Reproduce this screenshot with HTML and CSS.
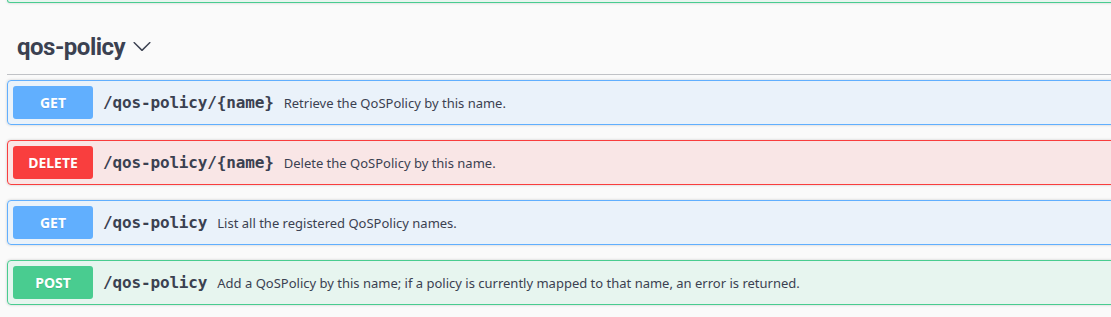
FILE: index.html
```html
<!DOCTYPE html>
<html lang="en">
<head>
    <meta charset="UTF-8">
    <meta name="viewport" content="width=device-width, initial-scale=1.0">
    <title>qos-policy</title>
    <link rel="stylesheet" href="styles.css">
</head>
<body>
    <div class="wrapper">
        <!-- tail of the previous tag section -->
        <div class="opblock opblock-post opblock-tail"></div>

        <div class="tag-section">
            <h3 class="opblock-tag">
                <span class="tag-name">qos-policy</span>
                <svg class="arrow" width="20" height="20" viewBox="0 0 20 20">
                    <path d="M17.418 6.109c.272-.268.709-.268.979 0s.271.701 0 .969l-7.908 7.83c-.27.268-.707.268-.979 0l-7.908-7.830c-.27-.268-.27-.701 0-.969.271-.268.709-.268.979 0L10 13.25l7.418-7.141z"/>
                </svg>
            </h3>

            <div class="opblock opblock-get">
                <div class="opblock-summary">
                    <span class="method">GET</span>
                    <span class="path">/qos-policy/{name}</span>
                    <span class="description">Retrieve the QoSPolicy by this name.</span>
                </div>
            </div>

            <div class="opblock opblock-delete">
                <div class="opblock-summary">
                    <span class="method">DELETE</span>
                    <span class="path">/qos-policy/{name}</span>
                    <span class="description">Delete the QoSPolicy by this name.</span>
                </div>
            </div>

            <div class="opblock opblock-get">
                <div class="opblock-summary">
                    <span class="method">GET</span>
                    <span class="path">/qos-policy</span>
                    <span class="description">List all the registered QoSPolicy names.</span>
                </div>
            </div>

            <div class="opblock opblock-post">
                <div class="opblock-summary">
                    <span class="method">POST</span>
                    <span class="path">/qos-policy</span>
                    <span class="description">Add a QoSPolicy by this name; if a policy is currently mapped to that name, an error is returned.</span>
                </div>
            </div>
        </div>
    </div>
</body>
</html>
```

FILE: styles.css
```css
body {
    margin: 0;
    background-color: #fafafa;
    font-family: 'Noto Sans', sans-serif;
    color: #3b4151;
    overflow: hidden;
}
.wrapper {
    width: 1200px;
    padding-left: 7px;
}
.opblock {
    margin: 0 0 15px;
    border: 1px solid #000;
    border-radius: 4px;
    box-shadow: 0 0 3px rgba(0, 0, 0, 0.19);
}
.opblock-tail {
    height: 2px;
    border-top: none;
    border-radius: 0 0 4px 4px;
}
.opblock-tag {
    display: flex;
    align-items: center;
    margin: 0 0 5px;
    padding: 11px 20px 9px 10px;
    font-family: Roboto, sans-serif;
    font-size: 24px;
    line-height: 36px;
    font-weight: 700;
    letter-spacing: -0.5px;
    border-bottom: 1px solid rgba(59, 65, 81, 0.3);
}
.arrow {
    margin-left: 7px;
    margin-top: -2px;
    fill: #3b4151;
}
.opblock-summary {
    display: flex;
    align-items: center;
    padding: 5px;
}
.method {
    min-width: 80px;
    box-sizing: border-box;
    padding: 6px 15px;
    font-size: 14px;
    line-height: 21px;
    font-weight: 700;
    text-align: center;
    color: #fff;
    border-radius: 3px;
    text-shadow: 0 1px 0 rgba(0, 0, 0, 0.1);
}
.path {
    padding: 0 10px;
    font-family: 'DejaVu Sans Mono', monospace;
    font-size: 16px;
    font-weight: 700;
    letter-spacing: -0.15px;
}
.description {
    font-size: 13px;
}
.opblock-get {
    border-color: #61affe;
    background: rgba(97, 175, 254, 0.1);
}
.opblock-get .method {
    background: #61affe;
}
.opblock-delete {
    border-color: #f93e3e;
    background: rgba(249, 62, 62, 0.1);
}
.opblock-delete .method {
    background: #f93e3e;
}
.opblock-post {
    border-color: #49cc90;
    background: rgba(73, 204, 144, 0.1);
}
.opblock-post .method {
    background: #49cc90;
}
```
